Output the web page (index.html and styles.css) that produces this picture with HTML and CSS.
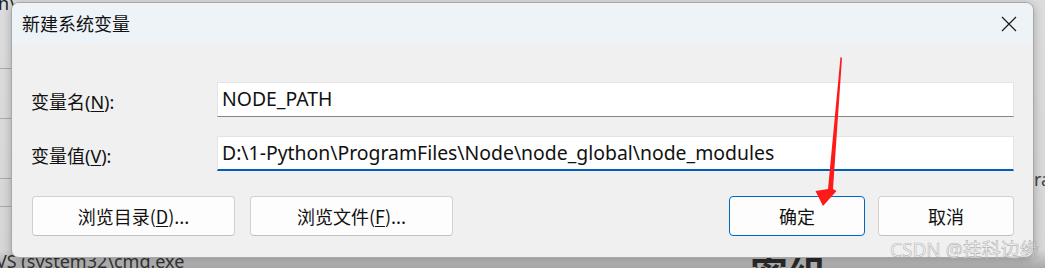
FILE: index.html
```html
<!DOCTYPE html>
<html lang="zh-CN">
<head>
<meta charset="utf-8">
<title>新建系统变量</title>
<link rel="stylesheet" href="styles.css">
</head>
<body>
<div class="backdrop">
  <div class="bg-line l1"></div>
  <div class="bg-line l2"></div>
  <div class="bg-line l3"></div>
  <div class="bg-line l4"></div>
  <div class="bg-text t-top">n\</div>
  <div class="bg-text t-bottom">VS (system32\cmd.exe</div>
  <div class="bg-text t-right">ra</div>
  <div class="bg-text t-big">密组</div>
</div>
<div class="dialog">
  <div class="titlebar">
    <span class="title">新建系统变量</span>
    <svg class="close" width="16" height="16" viewBox="0 0 16 16"><path d="M1 1 L15 15 M15 1 L1 15" stroke="#1a1a1a" stroke-width="1.2" fill="none"/></svg>
  </div>
  <div class="body">
    <div class="row">
      <label class="label">变量名(<u>N</u>):</label>
      <div class="field">NODE_PATH</div>
    </div>
    <div class="row">
      <label class="label">变量值(<u>V</u>):</label>
      <div class="field focused">D:\1-Python\ProgramFiles\Node\node_global\node_modules</div>
    </div>
    <div class="buttons">
      <div class="btn wide">浏览目录(<u>D</u>)...</div>
      <div class="btn wide">浏览文件(<u>F</u>)...</div>
      <div class="spacer"></div>
      <div class="btn primary">确定</div>
      <div class="btn">取消</div>
    </div>
  </div>
</div>
<svg class="arrow" width="1045" height="268" viewBox="0 0 1045 268">
  <polygon points="840.5,57 842,58 833,189 836.5,191 823,206 815.5,191 828,189" fill="#ff1a1a"/>
</svg>
<div class="watermark">CSDN @挂科边缘</div>
</body>
</html>
```

FILE: styles.css
```css
* { box-sizing: border-box; }
html, body { margin: 0; padding: 0; }
body {
  width: 1045px;
  height: 268px;
  overflow: hidden;
  position: relative;
  background: linear-gradient(to bottom, #dcdcdc 0, #d6d6d6 250px, #a8a8a8 268px);
  font-family: "Noto Sans", "Noto Sans CJK SC", sans-serif;
  padding: 2px 0 0 11px;
}
.backdrop { position: absolute; inset: 0; z-index: 0; overflow: hidden; }
.bg-line { position: absolute; left: 0; width: 11px; height: 1px; background: #a9a9a9; }
.l1 { top: 68px; } .l2 { top: 118px; } .l3 { top: 178px; } .l4 { top: 206px; }
.bg-text { position: absolute; color: #222; font-family: "Noto Sans", sans-serif; font-size: 18px; line-height: 22px; }
.t-top { left: -2px; top: -8px; }
.t-bottom { left: -4px; top: 250px; color: #333; }
.t-right { left: 1034px; top: 168px; color: #444; }
.t-big { left: 750px; top: 250px; font-size: 38px; line-height: 44px; font-weight: 700; font-family: "Noto Sans CJK SC", sans-serif; color: #2a2a2a; }

.dialog {
  position: relative;
  z-index: 1;
  width: 1023px;
  height: 256px;
  background: #f0f0f0;
  border: 1px solid #a8a8a8;
  border-radius: 8px;
  overflow: hidden;
  box-shadow: 0 2px 8px rgba(0,0,0,0.25);
}
.titlebar {
  height: 41px;
  background: #eef3f8;
  display: flex;
  align-items: center;
  justify-content: space-between;
  padding: 0 16px 0 10px;
}
.title {
  font-family: "Noto Sans CJK SC", sans-serif;
  font-size: 18px;
  color: #111;
  padding-bottom: 1px;
}
.close { display: block; }
.body {
  padding: 38px 19px 0 19px;
  display: flex;
  flex-direction: column;
}
.row {
  display: flex;
  align-items: center;
  height: 35px;
  margin-bottom: 19px;
}
.row + .row { margin-bottom: 0; }
.label {
  width: 186px;
  font-family: "Noto Sans", "Noto Sans CJK SC", sans-serif;
  font-size: 18px;
  color: #111;
  padding-top: 2px;
}
.label u, .btn u { text-decoration-thickness: 1px; text-underline-offset: 2px; }
.field {
  flex: 1;
  height: 35px;
  background: #fff;
  border: 1px solid #e4e4e4;
  border-bottom: 1px solid #868686;
  font-family: "Noto Sans", sans-serif;
  font-size: 19.4px;
  color: #111;
  padding: 0 0 0 4px;
  line-height: 31px;
  white-space: nowrap;
}
.field.focused { border-bottom: 2px solid #005fb8; }
.buttons {
  display: flex;
  gap: 15px;
  margin-top: 25px;
  padding-left: 1px;
}
.spacer { flex: 1; }
.btn {
  height: 40px;
  width: 136px;
  background: #fdfdfd;
  border: 1px solid #d0d0d0;
  border-bottom-color: #c0c0c0;
  border-radius: 4px;
  display: flex;
  align-items: center;
  justify-content: center;
  font-family: "Noto Sans CJK SC", "Noto Sans", sans-serif;
  font-size: 18px;
  color: #111;
}
.btn.wide { width: 203px; }
.btn.primary { border: 1px solid #0067c0; margin-right: -2px; }
.arrow { position: absolute; left: 0; top: 0; z-index: 2; }
.watermark {
  position: absolute;
  z-index: 3;
  left: 890px;
  top: 235px;
  font-family: "Noto Sans", "Noto Sans CJK SC", sans-serif;
  font-size: 19px;
  color: rgba(255,255,255,0.5);
  -webkit-text-stroke: 0.6px rgba(150,150,150,0.7);
  white-space: nowrap;
}
```
